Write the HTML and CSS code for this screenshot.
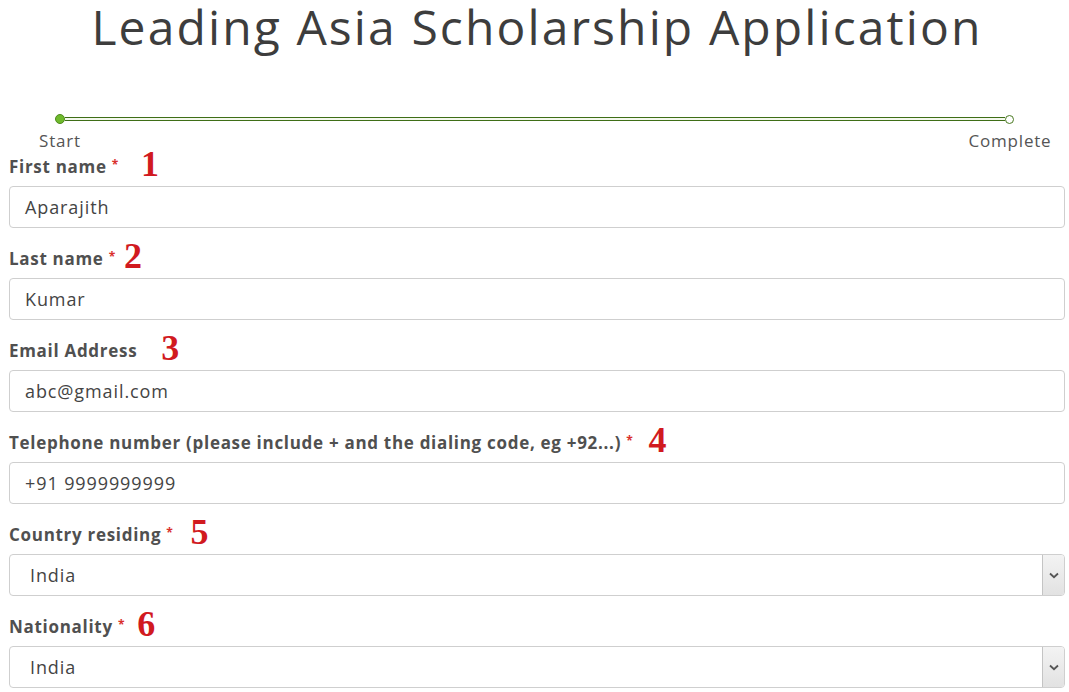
FILE: index.html
```html
<!DOCTYPE html>
<html lang="en">
<head>
<meta charset="utf-8">
<title>Leading Asia Scholarship Application</title>
<link rel="stylesheet" href="styles.css">
</head>
<body>
<div class="page">
  <h1 class="title">Leading Asia Scholarship Application</h1>

  <div class="progress">
    <div class="track">
      <span class="dot dot-start"></span>
      <span class="bar"></span>
      <span class="dot dot-end"></span>
    </div>
    <div class="steps">
      <span class="step">Start</span>
      <span class="step">Complete</span>
    </div>
  </div>

  <form class="form">
    <div class="field">
      <label class="label">First name <span class="req">*</span><span class="num n1">1</span></label>
      <div class="input">Aparajith</div>
    </div>
    <div class="field">
      <label class="label">Last name <span class="req">*</span><span class="num n2">2</span></label>
      <div class="input">Kumar</div>
    </div>
    <div class="field">
      <label class="label">Email Address<span class="num n3">3</span></label>
      <div class="input">abc@gmail.com</div>
    </div>
    <div class="field">
      <label class="label">Telephone number (please include + and the dialing code, eg +92...) <span class="req">*</span><span class="num n4">4</span></label>
      <div class="input">+91 9999999999</div>
    </div>
    <div class="field">
      <label class="label">Country residing <span class="req">*</span><span class="num n5">5</span></label>
      <div class="input select"><span class="select-text">India</span><span class="select-btn"><svg width="10" height="7" viewBox="0 0 10 7"><path d="M1 1.5 L5 5.2 L9 1.5" fill="none" stroke="#555" stroke-width="1.8"/></svg></span></div>
    </div>
    <div class="field">
      <label class="label">Nationality <span class="req">*</span><span class="num n6">6</span></label>
      <div class="input select"><span class="select-text">India</span><span class="select-btn"><svg width="10" height="7" viewBox="0 0 10 7"><path d="M1 1.5 L5 5.2 L9 1.5" fill="none" stroke="#555" stroke-width="1.8"/></svg></span></div>
    </div>
  </form>
</div>
</body>
</html>
```

FILE: styles.css
```css
* { box-sizing: border-box; }
html, body { margin: 0; padding: 0; background: #fff; }
body {
  font-family: "Open Sans", "Liberation Sans", sans-serif;
  color: #444;
  overflow: hidden;
}
.page {
  padding: 0 4px 0 9px;
}
.title {
  margin: -6px 0 0;
  text-align: center;
  font-weight: 400;
  font-size: 48px;
  line-height: 66px;
  letter-spacing: 2.1px;
  color: #3d3d3d;
}
.progress {
  margin-top: 54px;
  padding: 0 51px 0 46px;
}
.track {
  display: flex;
  align-items: center;
  height: 10px;
}
.dot {
  width: 10px;
  height: 10px;
  border-radius: 50%;
  flex: none;
}
.dot-start {
  background: #6fba2c;
  border: 1px solid #4f8a1e;
}
.dot-end {
  background: #fff;
  border: 1.5px solid #4a7a22;
  width: 9px;
  height: 9px;
}
.bar {
  flex: 1;
  height: 4px;
  border-top: 1.5px solid #3f6e17;
  border-bottom: 1.5px solid #3f6e17;
  background: #f4f8ee;
}
.steps {
  display: flex;
  justify-content: space-between;
  margin: 6px -46px 0 -45px;
  font-size: 17px;
  line-height: 22px;
  letter-spacing: 0.8px;
  color: #555;
}
.step {
  width: 100px;
  text-align: center;
}
.form {
  margin-top: 3px;
  display: flex;
  flex-direction: column;
  gap: 19px;
}
.field {
  display: flex;
  flex-direction: column;
}
.label {
  display: flex;
  align-items: center;
  height: 31px;
  padding-bottom: 8px;
  font-weight: 700;
  font-size: 17px;
  letter-spacing: 0.7px;
  color: #505050;
  white-space: pre;
}
.req {
  color: #d9302c;
  font-size: 12px;
  margin-top: -5px;
}
.num {
  font-family: "Liberation Serif", "DejaVu Serif", serif;
  color: #d11a1f;
  font-size: 36px;
  line-height: 31px;
  letter-spacing: 0;
  margin-top: -4px;
}
.n1 { margin-left: 22px; }
.n2 { margin-left: 8px; }
.n3 { margin-left: 24px; }
.n4 { margin-left: 15px; }
.n5 { margin-left: 17px; }
.n6 { margin-left: 12px; }
.input {
  height: 42px;
  border: 1px solid #cfcfcf;
  border-radius: 4px;
  padding: 0 15px;
  display: flex;
  align-items: center;
  font-size: 18px;
  letter-spacing: 0.9px;
  color: #444;
  background: #fff;
}
.select {
  padding: 0 0 0 20px;
  overflow: hidden;
}
.select-text { flex: 1; }
.select-btn {
  align-self: stretch;
  width: 22px;
  display: flex;
  align-items: center;
  justify-content: center;
  border-left: 1px solid #c4c4c4;
  background: linear-gradient(#f3f3f3, #e2e2e2);
}
```
